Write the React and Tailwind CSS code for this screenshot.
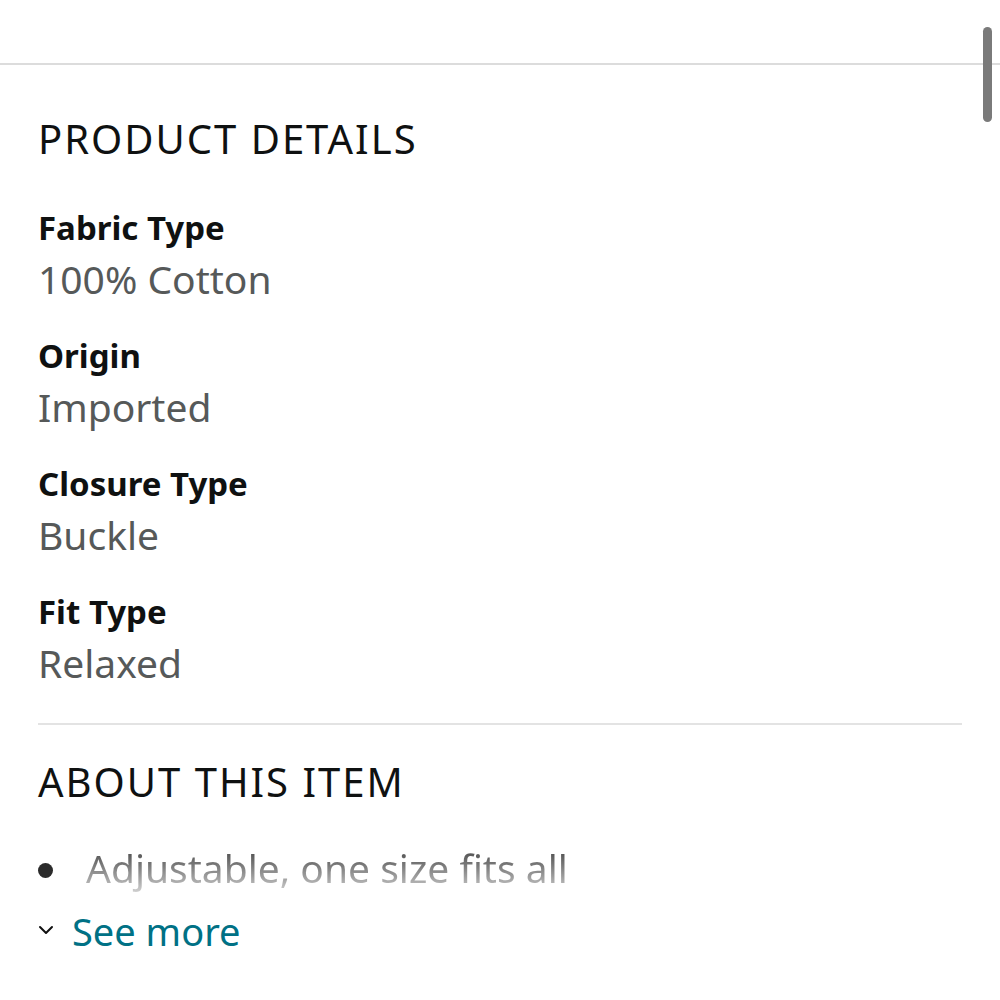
const details = [
  { label: "Fabric Type", value: "100% Cotton" },
  { label: "Origin", value: "Imported" },
  { label: "Closure Type", value: "Buckle" },
  { label: "Fit Type", value: "Relaxed" },
];

const App = () => {
  return (
    <div
      className="relative w-[1000px] h-[1000px] bg-white overflow-hidden"
      style={{ fontFamily: '"Noto Sans", "Open Sans", sans-serif' }}
    >
      <div className="h-[65px] border-b-2 border-[#dcdcdc]" />

      <div className="px-[38px]">
        <h2 className="mt-[50px] text-[40px] leading-[48px] tracking-[0.05em] text-[#0f1111]">
          PRODUCT DETAILS
        </h2>

        <div className="mt-[41px] flex flex-col gap-[26px]">
          {details.map((d) => (
            <div key={d.label}>
              <div className="text-[33px] leading-[48px] font-bold text-[#0f1111]">
                {d.label}
              </div>
              <div className="text-[39px] leading-[54px] text-[#565959]">
                {d.value}
              </div>
            </div>
          ))}
        </div>

        <div className="mt-[33px] w-[924px] border-t-2 border-[#e3e3e3]" />

        <h2 className="mt-[33px] text-[40px] leading-[48px] tracking-[0.05em] text-[#0f1111]">
          ABOUT THIS ITEM
        </h2>

        <div className="mt-[38px] flex items-start">
          <span className="mt-[19px] w-[15px] h-[15px] rounded-full bg-[#2b2b2b]" />
          <span className="ml-[33px] text-[39px] leading-[48px] bg-gradient-to-b from-[#3d3d3d] to-[#cfcfcf] bg-clip-text text-transparent">
            Adjustable, one size fits all
          </span>
        </div>

        <button className="mt-[15px] flex items-start text-[#007185]">
          <svg
            width="16"
            height="10"
            viewBox="0 0 16 10"
            className="mt-[18px]"
            fill="none"
            stroke="#111"
            strokeWidth="2"
            strokeLinecap="round"
            strokeLinejoin="round"
          >
            <path d="M2 2l6 6 6-6" />
          </svg>
          <span className="ml-[18px] text-[38px] leading-[48px]">See more</span>
        </button>
      </div>

      <div className="absolute left-[983px] top-[27px] w-[9px] h-[95px] rounded-full bg-[#7a7a7a]" />
    </div>
  );
};

export default App;
